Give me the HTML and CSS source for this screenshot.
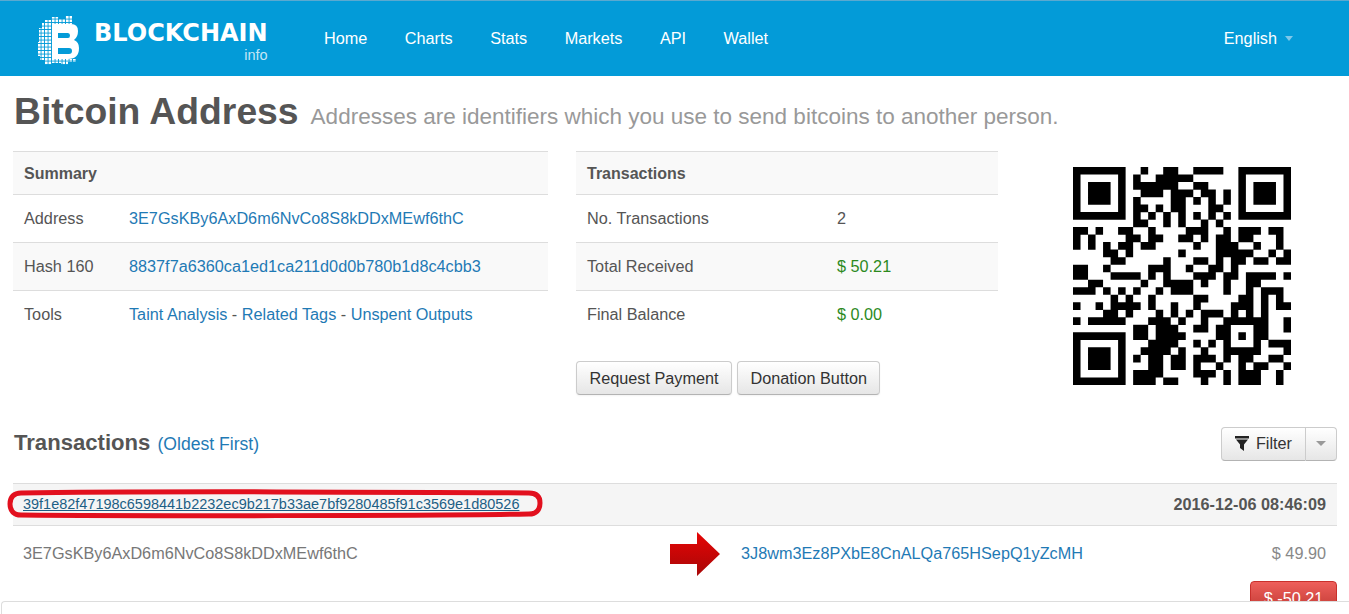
FILE: index.html
```html
<!DOCTYPE html>
<html lang="en">
<head>
<meta charset="utf-8">
<title>Bitcoin Address</title>
<link rel="stylesheet" href="styles.css">
</head>
<body>
<header class="topbar">
  <a class="brand">
    <svg class="brand-mark" viewBox="0 0 42 50" width="42" height="50" aria-hidden="true">
      <defs>
        <pattern id="pix" width="3.500" height="3.500" patternUnits="userSpaceOnUse"><rect width="2.600" height="2.600" fill="#fff"/></pattern>
      </defs>
      <path fill="url(#pix)" d="M7 4h6V1h8V3h6V0h7v8H14v35h24v3H30v3h-7v-2H14v2H7v-5H2v-4H0V26h1V12h3V7h3z"/>
      <path fill="#fff" fill-rule="evenodd" d="M14 8h19q7 0 7 7 0 6-4 9 5 2 5 8 0 11-11 11H14zM20 17v5h10q2 0 2-2.500t-2-2.500zM20 32v6h11q3 0 3-3t-3-3z"/>
    </svg>
    <span class="brand-text">
      <span class="brand-name">BLOCKCHAIN</span>
      <span class="brand-sub">info</span>
    </span>
  </a>
  <nav class="nav">
    <a>Home</a><a>Charts</a><a>Stats</a><a>Markets</a><a>API</a><a>Wallet</a>
  </nav>
  <a class="lang">English <span class="lang-caret"></span></a>
</header>

<main class="page">
  <div class="page-title">
    <h1>Bitcoin Address</h1>
    <small>Addresses are identifiers which you use to send bitcoins to another person.</small>
  </div>

  <section class="overview">
    <table class="info info-summary">
      <thead><tr><th colspan="2">Summary</th></tr></thead>
      <tbody>
        <tr><td class="lbl-s">Address</td><td><a class="link">3E7GsKBy6AxD6m6NvCo8S8kDDxMEwf6thC</a></td></tr>
        <tr><td class="lbl-s">Hash 160</td><td><a class="link">8837f7a6360ca1ed1ca211d0d0b780b1d8c4cbb3</a></td></tr>
        <tr><td class="lbl-s">Tools</td><td><a class="link">Taint Analysis</a> - <a class="link">Related Tags</a> - <a class="link">Unspent Outputs</a></td></tr>
      </tbody>
    </table>

    <div class="tx-col">
      <table class="info info-tx">
        <thead><tr><th colspan="2">Transactions</th></tr></thead>
        <tbody>
          <tr><td class="lbl-t">No. Transactions</td><td>2</td></tr>
          <tr><td class="lbl-t">Total Received</td><td class="money">$ 50.21</td></tr>
          <tr><td class="lbl-t">Final Balance</td><td class="money">$ 0.00</td></tr>
        </tbody>
      </table>
      <div class="actions">
        <button class="btn">Request Payment</button>
        <button class="btn">Donation Button</button>
      </div>
    </div>

    <svg class="qr" viewBox="0 0 29 29" width="218" height="218" aria-label="QR code">
      <path stroke="#000" stroke-width="1.02" fill="none" d="
      M0 .5h7M9 .5h1M12 .5h2M16 .5h4M22 .5h7
      M0 1.500h1M6 1.500h1M8 1.500h1M11 1.500h5M22 1.500h1M28 1.500h1
      M0 2.500h1M2 2.500h3M6 2.500h1M8 2.500h6M16 2.500h2M22 2.500h1M24 2.500h3M28 2.500h1
      M0 3.500h1M2 3.500h3M6 3.500h1M9 3.500h3M13 3.500h3M17 3.500h2M20 3.500h1M22 3.500h1M24 3.500h3M28 3.500h1
      M0 4.500h1M2 4.500h3M6 4.500h1M8 4.500h1M13 4.500h2M16 4.500h1M18 4.500h1M20 4.500h1M22 4.500h1M24 4.500h3M28 4.500h1
      M0 5.500h1M6 5.500h1M8 5.500h2M11 5.500h1M13 5.500h2M18 5.500h2M22 5.500h1M28 5.500h1
      M0 6.500h7M8 6.500h1M10 6.500h1M12 6.500h1M14 6.500h1M16 6.500h1M18 6.500h1M20 6.500h1M22 6.500h7
      M8 7.500h2M12 7.500h1M14 7.500h1M17 7.500h1M19 7.500h1
      M0 8.500h2M3 8.500h1M6 8.500h2M10 8.500h1M15 8.500h3M20 8.500h1M22 8.500h3M26 8.500h2
      M0 9.500h1M2 9.500h1M7 9.500h2M10 9.500h2M14 9.500h2M17 9.500h1M19 9.500h2M22 9.500h2M27 9.500h1
      M0 10.500h1M2 10.500h1M4 10.500h1M6 10.500h2M9 10.500h2M16 10.500h1M19 10.500h3M24 10.500h1M27 10.500h1
      M4 11.500h2M7 11.500h1M14 11.500h1M19 11.500h5M26 11.500h1M28 11.500h1
      M5 12.500h2M12 12.500h1M16 12.500h2M19 12.500h1M21 12.500h2M24 12.500h2M27 12.500h2
      M0 13.500h2M4 13.500h1M10 13.500h3M15 13.500h1M18 13.500h2M21 13.500h1
      M0 14.500h2M5 14.500h4M10 14.500h1M12 14.500h1M16 14.500h3M20 14.500h2M23 14.500h4M28 14.500h1
      M2 15.500h2M9 15.500h1M12 15.500h4M17 15.500h1M20 15.500h1M23 15.500h2
      M0 16.500h3M4 16.500h1M6 16.500h1M8 16.500h1M11 16.500h1M13 16.500h3M20 16.500h1M23 16.500h1M25 16.500h3
      M5 17.500h1M7 17.500h1M10 17.500h1M16 17.500h2M22 17.500h2M25 17.500h1M27 17.500h1
      M0 18.500h1M3 18.500h1M5 18.500h4M10 18.500h1M13 18.500h1M16 18.500h1M21 18.500h3M25 18.500h1M27 18.500h2
      M4 19.500h2M7 19.500h1M11 19.500h1M13 19.500h1M15 19.500h1M17 19.500h3M21 19.500h1M23 19.500h1M25 19.500h1
      M0 20.500h1M2 20.500h5M10 20.500h3M14 20.500h1M17 20.500h1M20 20.500h6M28 20.500h1
      M8 21.500h2M11 21.500h3M16 21.500h2M19 21.500h2M24 21.500h2M28 21.500h1
      M0 22.500h7M8 22.500h2M11 22.500h4M19 22.500h2M22 22.500h1M24 22.500h2
      M0 23.500h1M6 23.500h1M10 23.500h4M16 23.500h1M18 23.500h1M20 23.500h1M24 23.500h1M26 23.500h3
      M0 24.500h1M2 24.500h3M6 24.500h1M9 24.500h4M14 24.500h1M17 24.500h1M20 24.500h5M28 24.500h1
      M0 25.500h1M2 25.500h3M6 25.500h1M8 25.500h1M10 25.500h2M13 25.500h2M16 25.500h3M20 25.500h1M22 25.500h2M26 25.500h2
      M0 26.500h1M2 26.500h3M6 26.500h1M10 26.500h2M13 26.500h2M16 26.500h1M19 26.500h1M22 26.500h1M24 26.500h2M28 26.500h1
      M0 27.500h1M6 27.500h1M8 27.500h4M16 27.500h3M20 27.500h1M22 27.500h3M27 27.500h1
      M0 28.500h7M8 28.500h3M12 28.500h2M17 28.500h1M20 28.500h1M22 28.500h3M27 28.500h1"/>
    </svg>
  </section>

  <section class="tx-head">
    <h2>Transactions <a class="link sort">(Oldest First)</a></h2>
    <div class="filter">
      <button class="filter-main">
        <svg viewBox="0 0 14 15" width="14" height="15" aria-hidden="true"><path fill="#222" d="M0 0h14v2.500H0zM1 3.500h12L9 8.500v6.500L5 12V8.500z"/></svg>
        Filter
      </button>
      <button class="filter-caret"><span></span></button>
    </div>
  </section>

  <section class="tx">
    <div class="tx-title">
      <a class="tx-hash">39f1e82f47198c6598441b2232ec9b217b33ae7bf9280485f91c3569e1d80526</a>
      <span class="tx-time">2016-12-06 08:46:09</span>
    </div>
    <div class="tx-row">
      <span class="tx-from">3E7GsKBy6AxD6m6NvCo8S8kDDxMEwf6thC</span>
      <svg class="tx-arrow" viewBox="0 0 50 44" width="50" height="44" aria-hidden="true">
        <defs><linearGradient id="arrow-red" x1="0" y1="0" x2="0" y2="1"><stop offset="0" stop-color="#e60505"/><stop offset="1" stop-color="#a80808"/></linearGradient></defs>
        <path fill="url(#arrow-red)" d="M0 12h27V0l23 22-23 22V32H0z"/>
      </svg>
      <a class="link tx-to">3J8wm3Ez8PXbE8CnALQa765HSepQ1yZcMH</a>
      <span class="tx-amount">$ 49.90</span>
    </div>
    <div class="tx-foot"><button class="btn-red">$ -50.21</button></div>
  </section>
</main>

<svg class="ring" viewBox="0 0 536 30" width="536" height="30" aria-hidden="true">
  <path fill="none" stroke="#e2101e" stroke-width="5" d="M14 4C120 2 420 3 522 4c7 0 11 3 11 10s-4 11-11 11C420 27 120 27 14 26 7 26 3 22 3 15S7 4 14 4z"/>
</svg>
<div class="dock"></div>
</body>
</html>
```

FILE: styles.css
```css
html, body {
  margin: 0;
  height: 614px;
  overflow: hidden;
  background: #fff;
}
body {
  font-family: "Liberation Sans", Arial, sans-serif;
  font-size: 16.24px;
  color: #555;
  position: relative;
}
h1, h2 { margin: 0; }
button { font-family: inherit; cursor: pointer; }

.topbar {
  height: 75px;
  background: #039bd8;
  border-top: 1px solid #5aa9d0;
  display: flex;
  align-items: center;
  padding-left: 38px;
  padding-right: 56px;
  color: #fff;
}
.brand { display: flex; align-items: center; gap: 14px; width: 286px; }
.brand-mark { flex: none; margin-top: 4px; }
.brand-text { display: flex; flex-direction: column; align-items: flex-end; margin-top: 9px; }
.brand-name {
  font-family: "DejaVu Sans", sans-serif;
  font-weight: 700;
  font-size: 24px;
  line-height: 20px;
}
.brand-sub {
  font-family: "Liberation Sans", sans-serif;
  font-size: 14.500px;
  line-height: 17px;
  margin-top: 4px;
  color: #c4e6f5;
}
.nav { display: flex; gap: 37.500px; flex: 1; }
.lang { display: flex; align-items: center; gap: 8px; }
.lang-caret {
  width: 0; height: 0;
  border: 4.500px solid transparent;
  border-top: 5px solid #7fc8ea;
  border-bottom: 0;
}

.page { padding: 0 12px 0 13px; }
.page-title { display: flex; align-items: baseline; gap: 12px; height: 75px; }
.page-title h1 { font-size: 37.300px; line-height: 71px; color: #555; margin-left: 1px; }
.page-title small { font-size: 22.500px; color: #999; }

.overview { display: flex; align-items: flex-start; height: 252px; }
.info { border-collapse: collapse; border-top: 1px solid #ddd; }
.info th {
  text-align: left;
  font-weight: 700;
  font-size: 16px;
  height: 41px;
  padding: 1px 11px 0;
  background: #f9f9f9;
}
.info td {
  height: 47px;
  padding: 0 10px 0 11px;
  border-top: 1px solid #ddd;
}
.info tbody tr:nth-child(2) { background: #f9f9f9; }
.info-summary { width: 535px; }
.lbl-s { width: 84px; }
.info-tx { width: 422px; }
.lbl-t { width: 229px; }
.tx-col { margin-left: 28px; }
.money { color: #2c8a1e; }
.link { color: #1f7ab5; }
.actions { display: flex; gap: 5px; margin-top: 23px; }
.btn {
  height: 34px;
  padding: 0 12.500px;
  font-size: 16.24px;
  color: #333;
  background: linear-gradient(#fff, #e6e6e6);
  border: 1px solid #ccc;
  border-bottom-color: #b3b3b3;
  border-radius: 4px;
  box-shadow: inset 0 1px 0 rgba(255,255,255,.2), 0 1px 2px rgba(0,0,0,.05);
}
.qr { flex: none; margin-left: 75px; margin-top: 16px; }

.tx-head {
  display: flex;
  align-items: center;
  justify-content: space-between;
  height: 80px;
}
.tx-head h2 { font-size: 22.100px; color: #555; margin-left: 1px; }
.sort { font-size: 17.600px; font-weight: 400; margin-left: 1px; }
.filter { display: flex; height: 34px; margin-top: 1px; }
.filter-main, .filter-caret {
  background: linear-gradient(#fff, #e6e6e6);
  border: 1px solid #ccc;
  border-bottom-color: #b3b3b3;
  color: #333;
  font-size: 16.24px;
}
.filter-main {
  width: 85px;
  border-radius: 4px 0 0 4px;
  display: flex;
  align-items: center;
  justify-content: center;
  gap: 7px;
  padding: 0;
}
.filter-caret {
  width: 31px;
  border-left: 0;
  border-radius: 0 4px 4px 0;
  display: flex;
  align-items: center;
  justify-content: center;
  padding: 0;
}
.filter-caret span {
  width: 0; height: 0;
  border: 5px solid transparent;
  border-top: 5px solid #999;
  border-bottom: 0;
}

.tx-title {
  display: flex;
  align-items: center;
  justify-content: space-between;
  padding: 0 11px 1px 10px;
  height: 40px;
  background: #f5f5f5;
  border-top: 1px solid #ddd;
  border-bottom: 1px solid #ddd;
}
.tx-hash { color: #1d5f85; text-decoration: underline; font-size: 14.480px; }
.tx-time { font-weight: 700; }
.tx-row {
  display: flex;
  align-items: center;
  height: 55px;
  padding: 0 11px 0 10px;
  color: #777;
}
.tx-from { width: 647px; }
.tx-arrow { flex: none; margin-right: 21px; }
.tx-to { flex: 1; }
.tx-amount { color: #888; }
.tx-foot { display: flex; justify-content: flex-end; }
.btn-red {
  width: 87px;
  height: 34px;
  color: #fff;
  font-size: 16.24px;
  background: linear-gradient(#ee5f5b, #bd362f);
  border: 1px solid #c9302c;
  border-radius: 4px;
  padding: 0;
}

.ring { position: absolute; left: 7px; top: 489px; }
.dock {
  position: fixed;
  left: 1px;
  right: 0;
  top: 601px;
  height: 20px;
  background: #fff;
  border-top: 1px solid #ddd;
  border-left: 1px solid #ddd;
  border-top-left-radius: 4px;
}
```
